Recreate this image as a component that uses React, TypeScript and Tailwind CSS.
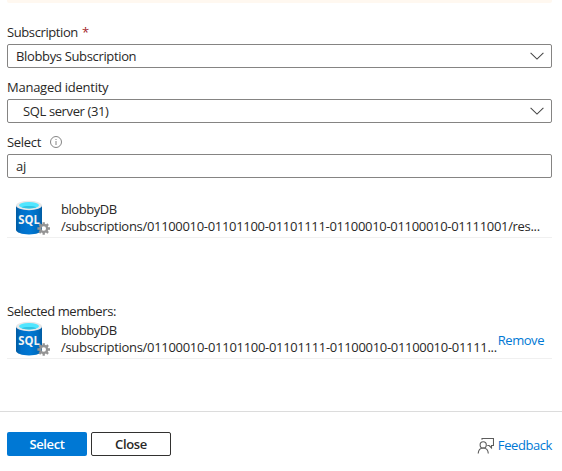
import type { ReactNode } from "react";

function Chevron() {
  return (
    <svg width="14" height="8" viewBox="0 0 14 8" fill="none" stroke="#444" strokeWidth="1.050">
      <path d="M.6.8 7 7.100 13.400.8" />
    </svg>
  );
}

function Label({ children }: { children: ReactNode }) {
  return <div className="flex h-[31px] items-center pt-[7px]">{children}</div>;
}

function Box({ children, className = "" }: { children: ReactNode; className?: string }) {
  return (
    <div
      className={`flex h-6 items-center justify-between rounded-[2px] border border-[#858483] pr-[7px] ${className}`}
    >
      {children}
    </div>
  );
}

function SqlIcon({ id }: { id: string }) {
  return (
    <svg className="shrink-0" width="36" height="36" viewBox="0 0 36 36">
      <defs>
        <linearGradient id={id}>
          <stop offset="0" stopColor="#005ba1" />
          <stop offset=".2" stopColor="#0070ca" />
          <stop offset=".55" stopColor="#0078d4" />
          <stop offset=".85" stopColor="#006cbe" />
          <stop offset="1" stopColor="#005ba1" />
        </linearGradient>
      </defs>
      <path d="M1 5.500v24.300C1 32.400 6.800 34.500 14 34.500s13-2.100 13-4.700V5.500z" fill={`url(#${id})`} />
      <ellipse cx="14" cy="5.500" rx="13" ry="4.700" fill="#e8e8e8" />
      <ellipse cx="14" cy="5.200" rx="10" ry="3.200" fill="#50e6ff" />
      <path d="M6.500 7.300C8 6.500 10.700 6 14 6s6 .5 7.500 1.300C19.800 8 17.200 8.500 14 8.500S8.200 8 6.500 7.300z" fill="#32c4e4" />
      <text
        x="3.200"
        y="23.500"
        textLength="21.600"
        lengthAdjust="spacingAndGlyphs"
        fill="#f2f2f2"
        fontSize="12.800"
        fontWeight="700"
        fontFamily="Open Sans, sans-serif"
      >
        SQL
      </text>
      <g transform="translate(28.700 28.500)" stroke="#949494" fill="none">
        <circle r="3.500" strokeWidth="2.400" />
        <path
          d="M0-4v-2.300M0 4v2.300M-4 0h-2.300M4 0h2.300M-2.900-2.900l-1.500-1.500M2.900-2.900l1.500-1.500M-2.900 2.900l-1.500 1.500M2.900 2.900l1.500 1.500"
          strokeWidth="2.300"
        />
      </g>
    </svg>
  );
}

function Member({ id, path, action }: { id: string; path: ReactNode; action?: ReactNode }) {
  return (
    <div className="flex h-[38px] border-b border-[#f0f0f0] pl-2">
      <SqlIcon id={id} />
      <div className="ml-[10px] pt-px leading-[17px]">
        <div className="tracking-[-0.45px]">blobbyDB</div>
        {path}
      </div>
      {action}
    </div>
  );
}

export default function App() {
  return (
    <div className="flex h-[471px] w-[562px] flex-col overflow-hidden bg-white font-['Open_Sans',sans-serif] text-[13px] leading-[18px] whitespace-nowrap text-[#292827]">
      <main className="flex h-[411px] flex-col pr-[10px] pl-[7px]">
        <div className="mb-[10px] h-[3px] shrink-0 rounded-b-[2px] bg-[#fff8f0]" />
        <Label>
          <span className="tracking-[-0.4px]">Subscription</span>
          <span className="ml-1 text-[#a4262c]">*</span>
        </Label>
        <Box className="pl-2">
          <span className="tracking-[-0.35px]">Blobbys Subscription</span>
          <Chevron />
        </Box>
        <Label>
          <span className="tracking-[-0.25px]">Managed identity</span>
        </Label>
        <Box className="pl-[15px]">
          <span className="tracking-[-0.38px]">SQL server (31)</span>
          <Chevron />
        </Box>
        <Label>
          <span className="tracking-[-0.3px]">Select</span>
          <svg className="ml-[9px]" width="12" height="12" viewBox="0 0 12 12" fill="none" stroke="#777">
            <circle cx="6" cy="6" r="5.500" strokeWidth=".9" />
            <path d="M6 5v4M6 3v1" strokeWidth=".9" />
          </svg>
        </Label>
        <Box className="pl-2">
          <span className="tracking-[-0.2px]">aj</span>
        </Box>
        <div className="mt-[22px]">
          <Member
            id="available"
            path={
              <div className="tracking-[-0.31px]">
                /subscriptions/01100010-01101100-01101111-01100010-01100010-01111001/res...
              </div>
            }
          />
        </div>
        <div className="mt-[64px] h-[19px] tracking-[-0.42px]">Selected members:</div>
        <Member
          id="selected"
          path={
            <div className="tracking-[-0.3px]">
              /subscriptions/01100010-01101100-01101111-01100010-01100010-01111...
            </div>
          }
          action={<a className="ml-auto pt-[10px] pr-2 tracking-[-0.45px] text-[#0078d4]">Remove</a>}
        />
      </main>
      <footer className="flex h-[60px] items-start gap-1 border-t border-[#dcdcdc] pt-5 pr-[10px] pl-[7px]">
        <button className="h-6 w-20 rounded-[2px] bg-[#0078d4] font-semibold tracking-[-0.35px] text-white">Select</button>
        <button className="h-6 w-20 rounded-[2px] border border-[#323130] font-semibold tracking-[-0.35px]">Close</button>
        <a className="ml-auto flex items-center gap-1 pt-1 text-[#0078d4]">
          <svg width="17" height="17" viewBox="0 0 17 17" fill="none" stroke="#5c5c5c" strokeWidth="1.100">
            <path d="M5 2.800V1.500h11.500v7h-2v2.400L12.100 8.500H10.300" />
            <circle cx="6.200" cy="7.900" r="3.100" />
            <path d="M1.200 16.500c.2-3.300 2.200-5.500 5-5.500s4.900 2.200 5.100 5.500" />
          </svg>
          <span className="tracking-[-0.42px]">Feedback</span>
        </a>
      </footer>
    </div>
  );
}
